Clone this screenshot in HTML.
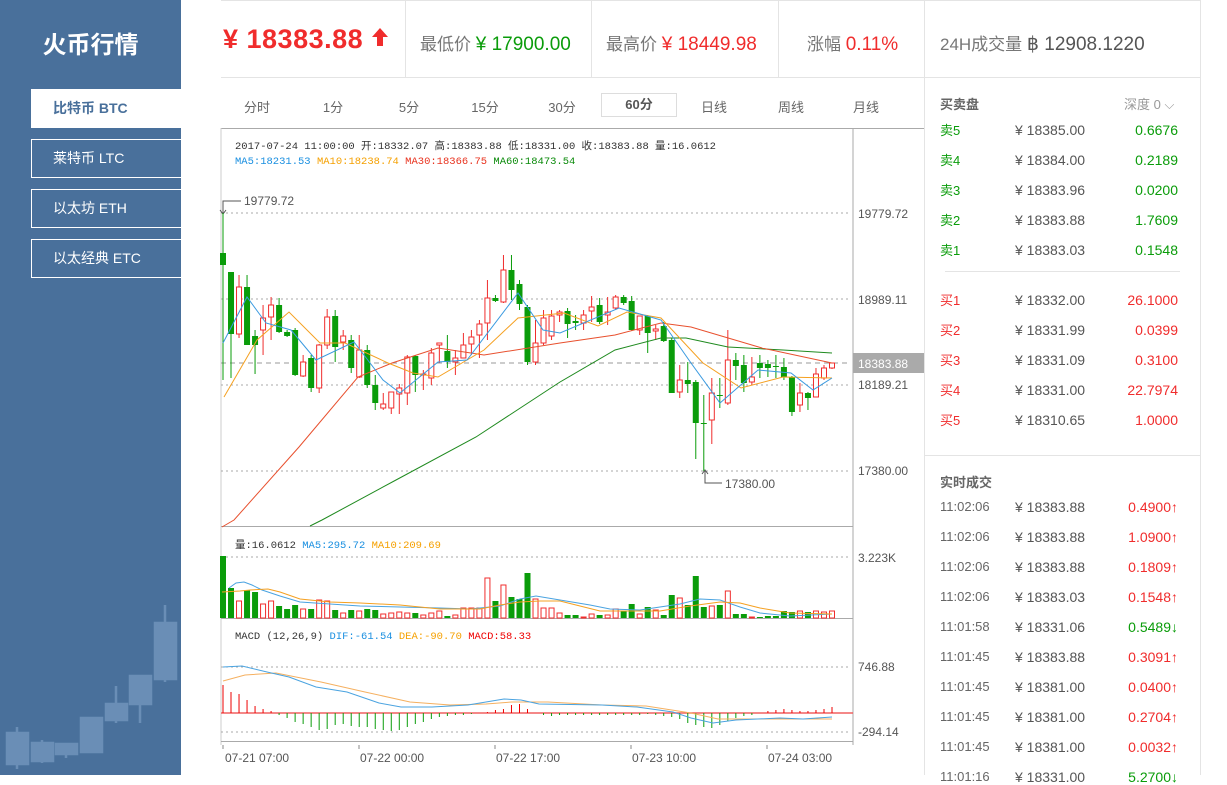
<!DOCTYPE html>
<html><head><meta charset="utf-8">
<style>
*{margin:0;padding:0;box-sizing:border-box}
body{width:1227px;height:775px;overflow:hidden;background:#fff;font-family:"Liberation Sans","Noto Sans CJK SC",sans-serif;position:relative;color:#555}
.abs{position:absolute;white-space:nowrap}
#side{position:absolute;left:0;top:0;width:181px;height:775px;background:#49709b}
#side h1{position:absolute;left:0;width:181px;top:25px;text-align:center;color:#fff;font-size:24px;font-weight:bold}
.mi{position:absolute;left:31px;width:150px;height:39px;border:1px solid #fff;border-right:none;color:#fff;font-size:14px;line-height:37px;padding-left:21px}
.mi.act{background:#fff;color:#49709b;font-weight:bold}
.hd{top:30px;font-size:17px;color:#777}
.hd span{font-size:19px}
.vl{position:absolute;width:1px;background:#e4e4e4}
.hl{position:absolute;height:1px;background:#e4e4e4}
.tab{top:97px;font-size:13px;color:#666;transform:translateX(-50%)}
.ob{font-size:14px}
.g{color:#0a9c0a}.r{color:#f02c2c}
</style></head><body>
<div id="side"><h1>火币行情</h1>
<div class="mi act" style="top:89px">比特币 BTC</div>
<div class="mi" style="top:139px">莱特币 LTC</div>
<div class="mi" style="top:189px">以太坊 ETH</div>
<div class="mi" style="top:239px">以太经典 ETC</div>
<svg class="abs" style="left:0;top:580px" width="181" height="195">
<g fill="#6a8eb6" stroke="#6a8eb6" stroke-width="2.5">
<line x1="17" y1="147" x2="17" y2="189"/><rect x="7" y="153" width="21" height="31"/>
<line x1="42" y1="160" x2="42" y2="183"/><rect x="32" y="163" width="21" height="18"/>
<line x1="66" y1="163" x2="66" y2="178"/><rect x="56" y="164" width="21" height="10"/>
<rect x="81" y="138" width="21" height="34"/>
<line x1="116" y1="106" x2="116" y2="143"/><rect x="106" y="124" width="21" height="16"/>
<line x1="140" y1="95" x2="140" y2="143"/><rect x="130" y="96" width="21" height="28"/>
<line x1="165" y1="25" x2="165" y2="102"/><rect x="155" y="43" width="21" height="56"/>
</g></svg>
</div>

<div class="hl" style="left:221px;top:0;width:980px"></div>
<div class="hl" style="left:221px;top:77px;width:980px"></div>
<div class="vl" style="left:405px;top:0;height:77px"></div>
<div class="vl" style="left:591px;top:0;height:77px"></div>
<div class="vl" style="left:778px;top:0;height:77px"></div>
<div class="vl" style="left:924px;top:0;height:775px"></div>
<div class="vl" style="left:1200px;top:0;height:775px"></div>
<div class="abs r" style="left:223px;top:24px;font-size:27px;font-weight:bold;letter-spacing:0.5px">¥ 18383.88</div>
<svg class="abs" style="left:372px;top:28px" width="16" height="18"><path d="M8 0 L16 9 L11 9 L11 18 L5 18 L5 9 L0 9Z" fill="#f02c2c"/></svg>
<div class="abs hd" style="left:420px">最低价 <span class="g">¥ 17900.00</span></div>
<div class="abs hd" style="left:606px">最高价 <span class="r">¥ 18449.98</span></div>
<div class="abs hd" style="left:807px">涨幅 <span class="r">0.11%</span></div>
<div class="abs hd" style="left:940px">24H成交量 <span style="color:#555">฿ 12908.1220</span></div>

<div class="hl" style="left:221px;top:128px;width:703px;background:#aaa"></div>
<div class="abs tab" style="left:257px">分时</div>
<div class="abs tab" style="left:333px">1分</div>
<div class="abs tab" style="left:409px">5分</div>
<div class="abs tab" style="left:485px">15分</div>
<div class="abs tab" style="left:562px">30分</div>
<div class="abs" style="left:601px;top:93px;width:76px;height:24px;border:1px solid #ddd;text-align:center;line-height:22px;font-size:13px;font-weight:bold;color:#555">60分</div>
<div class="abs tab" style="left:714px">日线</div>
<div class="abs tab" style="left:791px">周线</div>
<div class="abs tab" style="left:866px">月线</div>

<svg id="ch" class="abs" style="left:0;top:0" width="924" height="775" font-family="Liberation Mono,Noto Sans CJK SC,monospace">
<line x1="221" y1="128" x2="221" y2="745" stroke="#ccc"/>
<line x1="853" y1="128" x2="853" y2="745" stroke="#aaa"/>
<line x1="221" y1="526.5" x2="853" y2="526.5" stroke="#aaa"/>
<line x1="221" y1="618.5" x2="853" y2="618.5" stroke="#aaa"/>
<line x1="221" y1="741.5" x2="853" y2="741.5" stroke="#aaa"/>
<g stroke="#aaa" stroke-dasharray="2,3">
<line x1="221" y1="213" x2="850" y2="213"/><line x1="221" y1="299" x2="850" y2="299"/>
<line x1="221" y1="385" x2="850" y2="385"/><line x1="221" y1="471" x2="850" y2="471"/>
<line x1="221" y1="557" x2="850" y2="557"/><line x1="221" y1="667" x2="850" y2="667"/>
<line x1="221" y1="732" x2="850" y2="732"/>
</g>
<line x1="221" y1="363" x2="850" y2="363" stroke="#999" stroke-dasharray="5,4"/>
<rect x="853" y="353" width="71" height="20" fill="#aaa"/>
<g font-family="Liberation Sans,sans-serif" font-size="12" fill="#555">
<text x="858" y="218">19779.72</text><text x="858" y="304">18989.11</text>
<text x="858" y="368" fill="#fff">18383.88</text><text x="858" y="389">18189.21</text>
<text x="858" y="475">17380.00</text><text x="858" y="562">3.223K</text>
<text x="858" y="671">746.88</text><text x="858" y="736">-294.14</text>
<text x="225" y="762">07-21 07:00</text><text x="360" y="762">07-22 00:00</text>
<text x="496" y="762">07-22 17:00</text><text x="632" y="762">07-23 10:00</text>
<text x="768" y="762">07-24 03:00</text>
<text x="244" y="205">19779.72</text><text x="725" y="488">17380.00</text>
</g>
<g stroke="#888"><line x1="223" y1="745" x2="223" y2="749"/><line x1="359" y1="745" x2="359" y2="749"/><line x1="495" y1="745" x2="495" y2="749"/><line x1="631" y1="745" x2="631" y2="749"/><line x1="767" y1="745" x2="767" y2="749"/></g>
<path d="M223 213 V201 H241 M220 210 L223 214 L226 210" stroke="#555" fill="none"/>
<path d="M705 471 V483 H722 M702 474 L705 470 L708 474" stroke="#555" fill="none"/>
<g font-size="10.5">
<text x="235" y="149" fill="#333">2017-07-24 11:00:00  开:18332.07 高:18383.88 低:18331.00 收:18383.88 量:16.0612</text>
<text x="235" y="164"><tspan fill="#1a8fe0">MA5:18231.53</tspan> <tspan fill="#f5a000">MA10:18238.74</tspan> <tspan fill="#e8321e">MA30:18366.75</tspan> <tspan fill="#0a8a0a">MA60:18473.54</tspan></text>
<text x="235" y="548"><tspan fill="#333">量:16.0612</tspan> <tspan fill="#1a8fe0">MA5:295.72</tspan> <tspan fill="#f5a000">MA10:209.69</tspan></text>
<text x="235" y="639"><tspan fill="#333">MACD (12,26,9)</tspan> <tspan fill="#1a8fe0">DIF:-61.54</tspan> <tspan fill="#f5a000">DEA:-90.70</tspan> <tspan fill="#e00">MACD:58.33</tspan></text>
</g>
<g id="dyn"></g>
</svg>

<div class="abs" style="left:940px;top:94px;font-size:13px;font-weight:bold;color:#666">买卖盘</div>
<div class="abs" style="left:1124px;top:94px;font-size:13px;color:#999">深度 0 ⌵</div>
<div id="ob"></div>
<div class="hl" style="left:945px;top:271px;width:235px"></div>
<div class="hl" style="left:924px;top:455px;width:277px"></div>
<div class="abs" style="left:940px;top:472px;font-size:13px;font-weight:bold;color:#666">实时成交</div>

<script>
var NS="http://www.w3.org/2000/svg",g=document.getElementById("dyn");
function el(t,a){var e=document.createElementNS(NS,t);for(var k in a)e.setAttribute(k,a[k]);g.appendChild(e);return e}
var C=[[253,265,213,380],[272,334,275,378],[334,287,275,338],[287,345,275,345],[336,345,330,374],[330,318,305,355],[317,305,297,340],[305,332,298,333],[332,336,330,337],[330,375,328,376],[376,362,355,377],[358,388,355,392],[388,345,344,393],[345,317,309,349],[316,347,310,362],[342,336,330,350],[340,368,335,373],[377,350,335,378],[350,385,345,388],[385,403,375,410],[408,404,393,410],[408,392,392,414],[394,388,384,414],[393,357,355,405],[356,375,355,392],[375,374,370,390],[378,353,348,385],[345,343,343,363],[351,362,335,368],[362,358,350,375],[358,345,333,358],[344,337,330,355],[335,324,320,358],[323,298,280,340],[298,301,295,302],[302,270,255,303],[270,290,255,300],[284,304,280,310],[307,362,305,365],[362,343,320,365],[343,318,310,345],[336,316,310,340],[315,312,310,322],[311,324,308,338],[321,323,315,330],[323,315,310,330],[311,307,296,322],[305,322,298,324],[315,312,297,325],[308,297,295,310],[297,303,295,305],[301,330,296,331],[330,316,316,335],[316,333,315,353],[331,329,325,340],[326,341,322,342],[340,393,338,393],[392,380,365,398],[380,384,362,393],[382,423,380,459],[423,424,395,471],[420,393,378,444],[395,395,378,408],[403,360,330,405],[360,366,353,380],[365,383,355,392],[382,377,357,385],[363,368,355,378],[364,368,360,377],[366,366,355,378],[367,377,358,380],[377,412,376,416],[405,393,383,412],[393,398,392,410],[397,374,368,397],[378,368,365,380],[368,363,363,369]];
var N=C.length,x0=223,dx=(832-223)/(N-1);
C.forEach(function(c,i){var x=x0+i*dx,up=c[1]<c[0],col=up?"#f02c2c":"#0a9c0a";
el("line",{x1:x,x2:x,y1:c[2],y2:c[3],stroke:col});
var t=Math.min(c[0],c[1]),h=Math.max(Math.abs(c[0]-c[1]),1);
if(up)el("rect",{x:x-2.5,y:t,width:5,height:h,fill:"#fff",stroke:col});else el("rect",{x:x-3,y:t,width:6,height:h,fill:col});});
function pl(p,col){el("polyline",{points:p,fill:"none",stroke:col,"stroke-width":1})}
pl("310,526 322,520 396,480 476,437 560,382 615,350 661,338 686,338 728,347 783,350 832,353","#1f8a1f");
pl("222,527 234,520 299,447 358,377 392,363 438,348 484,355 560,343 615,335 661,323 691,327 762,348 832,363","#e8502e");
pl("224,397 257,340 289,312 320,343 345,343 388,363 413,373 438,377 484,350 518,318 564,313 598,326 627,312 661,318 703,363 741,388 783,377 832,378","#f5a020");
pl("223,343 247,297 266,323 291,330 316,360 354,342 383,380 400,393 438,362 467,360 518,293 543,330 560,333 619,308 661,320 691,363 720,403 758,370 791,373 813,390 832,378","#3a9ae0");
var V=[62,30,17,28,26,14,17,12,9,13,9,9,18,17,8,5,8,7,9,8,4,5,6,5,5,3,5,7,2,3,10,10,10,40,17,33,21,19,45,19,10,10,5,3,3,1,4,3,3,9,7,14,4,11,8,3,23,20,13,42,11,12,13,27,4,4,1,1,2,2,7,6,7,6,7,6,7];
C.forEach(function(c,i){var x=x0+i*dx,h=V[i]||2,up=c[1]<c[0],col=up?"#f02c2c":"#0a9c0a";
if(up)el("rect",{x:x-2.5,y:618-h,width:5,height:h,fill:"#fff",stroke:col});else el("rect",{x:x-3,y:618-h,width:6,height:h,fill:col});});
pl("229,588 236,583 244,582 252,585 262,590 280,596 300,602 330,604 360,606 400,607 440,608 470,609 500,606 520,599 536,596 560,600 590,605 610,609 640,610 660,607 680,604 700,599 720,600 740,607 760,613 790,616 832,614","#4aa3e0");
pl("222,592 240,591 250,590 268,589 280,592 300,599 330,602 360,603 400,605 440,609 480,609 500,605 520,602 540,601 560,601 580,606 600,611 640,611 660,611 690,606 720,602 740,603 760,608 790,613 832,614","#f5a020");
el("line",{x1:221,x2:853,y1:713,y2:713,stroke:"#f06060","stroke-width":1.5});
var M=[28,21,19,13,7,4,2,-2,-5,-9,-11,-14,-17,-16,-12,-11,-13,-14,-14,-16,-17,-18,-17,-14,-11,-9,-6,-4,-3,-2,-2,-1,0,1,3,4,8,9,4,0,-2,-3,-2,-2,-2,-2,-2,-2,-2,-2,-2,-2,-2,-1,-2,-3,-4,-6,-10,-12,-14,-15,-12,-8,-5,-3,-2,0,2,3,4,3,2,2,3,4,6];
M.forEach(function(m,i){var x=x0+i*dx;if(m)el("line",{x1:x,x2:x,y1:713,y2:713-m,stroke:m>0?"#e00":"#0a9c0a"});});
pl("223,681 245,675 276,673 321,682 365,692 410,702 450,705 486,704 512,702 548,702 602,705 646,706 691,713 718,719 758,719 803,719 832,719","#f5b060");
pl("223,667 242,666 267,672 289,677 316,687 347,692 379,703 401,707 432,707 468,705 504,699 521,700 539,704 602,705 637,707 673,712 691,718 713,723 736,720 780,718 803,719 832,717","#4aa3e0");
var ob=document.getElementById("ob"),h="";
var S=[["卖5","18385.00","0.6676"],["卖4","18384.00","0.2189"],["卖3","18383.96","0.0200"],["卖2","18383.88","1.7609"],["卖1","18383.03","0.1548"]];
var B=[["买1","18332.00","26.1000"],["买2","18331.99","0.0399"],["买3","18331.09","0.3100"],["买4","18331.00","22.7974"],["买5","18310.65","1.0000"]];
function row(y,a,p,v,cl,ac){return '<div class="abs ob '+(ac||"")+'" style="left:940px;top:'+(ac?y-2:y)+'px;font-size:13px">'+a+'</div><div class="abs ob" style="left:1015px;top:'+y+'px;color:#555">¥ '+p+'</div><div class="abs ob '+cl+'" style="right:49px;top:'+y+'px">'+v+'</div>'}
S.forEach(function(s,i){h+=row(122+30*i,s[0],s[1],s[2],"g","g")});
B.forEach(function(s,i){h+=row(292+30*i,s[0],s[1],s[2],"r","r")});
var T=[["11:02:06","18383.88","0.4900↑","r"],["11:02:06","18383.88","1.0900↑","r"],["11:02:06","18383.88","0.1809↑","r"],["11:02:06","18383.03","0.1548↑","r"],["11:01:58","18331.06","0.5489↓","g"],["11:01:45","18383.88","0.3091↑","r"],["11:01:45","18381.00","0.0400↑","r"],["11:01:45","18381.00","0.2704↑","r"],["11:01:45","18381.00","0.0032↑","r"],["11:01:16","18331.00","5.2700↓","g"]];
T.forEach(function(t,i){h+=row(499+30*i,'<span style="color:#666">'+t[0]+'</span>',t[1],t[2],t[3],"")});
ob.innerHTML=h;
</script>
</body></html>
